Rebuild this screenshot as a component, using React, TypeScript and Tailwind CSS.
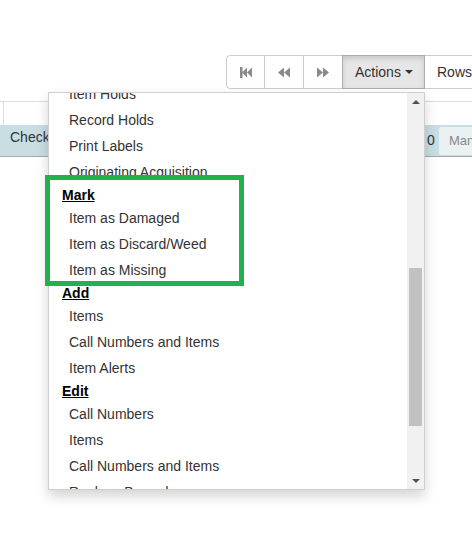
import React from "react";

type Entry = { kind: "item" | "header"; label: string };

const menu: Entry[] = [
  { kind: "item", label: "Item Holds" },
  { kind: "item", label: "Record Holds" },
  { kind: "item", label: "Print Labels" },
  { kind: "item", label: "Originating Acquisition" },
  { kind: "header", label: "Mark" },
  { kind: "item", label: "Item as Damaged" },
  { kind: "item", label: "Item as Discard/Weed" },
  { kind: "item", label: "Item as Missing" },
  { kind: "header", label: "Add" },
  { kind: "item", label: "Items" },
  { kind: "item", label: "Call Numbers and Items" },
  { kind: "item", label: "Item Alerts" },
  { kind: "header", label: "Edit" },
  { kind: "item", label: "Call Numbers" },
  { kind: "item", label: "Items" },
  { kind: "item", label: "Call Numbers and Items" },
  { kind: "item", label: "Replace Barcodes" },
];

function FastBackIcon() {
  return (
    <svg width="12" height="11" viewBox="0 0 12 11" className="fill-current">
      <rect x="0" y="0" width="2.5" height="11" />
      <polygon points="2,5.5 7,0.5 7,10.5" />
      <polygon points="7,5.5 12,0.5 12,10.5" />
    </svg>
  );
}

function BackIcon() {
  return (
    <svg width="12" height="11" viewBox="0 0 12 11" className="fill-current">
      <polygon points="0,5.5 6,0.5 6,10.5" />
      <polygon points="6,5.5 12,0.5 12,10.5" />
    </svg>
  );
}

function ForwardIcon() {
  return (
    <svg width="12" height="11" viewBox="0 0 12 11" className="fill-current">
      <polygon points="12,5.5 6,0.5 6,10.5" />
      <polygon points="6,5.5 0,0.5 0,10.5" />
    </svg>
  );
}

function ActionsMenu() {
  return (
    <div className="absolute top-full right-0 z-10 mt-[3px] flex h-[398px] w-[377px] border border-[#cfcfcf] bg-white text-left shadow-[0_6px_12px_rgba(0,0,0,0.175)]">
      <div className="flex-1 overflow-hidden">
        <ul className="-mt-[12px]">
          {menu.map((m, i) =>
            m.kind === "header" ? (
              <li key={i} className="px-[13px] text-[14px] leading-[20px] font-bold text-black underline">
                {m.label}
              </li>
            ) : (
              <li key={i} className="px-[20px] py-[3px] text-[14px] leading-[20px] text-[#333]">
                {m.label}
              </li>
            )
          )}
        </ul>
      </div>
      <div className="flex w-[17px] flex-col bg-[#f1f1f1]">
        <div className="flex h-[17px] items-center justify-center">
          <div className="h-0 w-0 border-x-[4px] border-b-[4px] border-x-transparent border-b-[#505050]" />
        </div>
        <div className="flex-1 px-[2px]">
          <div className="mt-[158px] h-[158px] bg-[#c1c1c1]" />
        </div>
        <div className="flex h-[17px] items-center justify-center">
          <div className="h-0 w-0 border-x-[4px] border-t-[4px] border-x-transparent border-t-[#505050]" />
        </div>
      </div>
    </div>
  );
}

export default function App() {
  return (
    <div className="relative h-[536px] w-[472px] overflow-hidden bg-white pt-[55px] font-['Liberation_Sans',Arial,sans-serif] text-[14px] text-[#333]">
      {/* toolbar */}
      <div className="flex whitespace-nowrap pl-[226px]">
        <div className="flex h-[34px] text-[#8a8a8a]">
          <button className="flex w-[39px] items-center justify-center rounded-l-[4px] border border-[#ccc] bg-white">
            <FastBackIcon />
          </button>
          <button className="-ml-px flex w-[40px] items-center justify-center border border-[#ccc] bg-white">
            <BackIcon />
          </button>
          <button className="-ml-px flex w-[40px] items-center justify-center border border-[#ccc] bg-white">
            <ForwardIcon />
          </button>
          <div className="relative -ml-px">
            <button className="flex h-[34px] w-[83px] items-center border border-[#adadad] bg-[#e6e6e6] pl-[12px] text-[14px] leading-[20px] text-[#333] shadow-[inset_0_3px_5px_rgba(0,0,0,0.125)]">
              Actions
              <span className="ml-[4px] h-0 w-0 border-x-[4px] border-t-[4px] border-x-transparent border-t-[#333]" />
            </button>
            <ActionsMenu />
          </div>
          <button className="-ml-px flex w-[80px] items-center border border-[#ccc] bg-white pl-[12px] text-[14px] text-[#333]">
            Rows
          </button>
        </div>
      </div>

      {/* table behind the menu */}
      <div className="mt-[12px]">
        <div className="h-[24px] border-t border-[#ddd]">
          <div className="ml-[3px] h-full border-l border-[#ddd]" />
        </div>
        <div className="flex h-[32px] items-center overflow-hidden whitespace-nowrap border-b border-[#a9a9a9] bg-[#c8dee3]">
          <div className="w-[427px] shrink-0 pb-[6px] pl-[10px]">Check Out</div>
          <div className="w-[12px] shrink-0">0</div>
          <div className="flex h-[28px] w-[80px] shrink-0 items-center rounded-l-[3px] bg-[#e9f1f3] pl-[10px] text-[13px] text-[#888]">
            Manage
          </div>
        </div>
      </div>

      {/* highlight around the Mark group */}
      <div className="pointer-events-none absolute top-[175px] left-[45px] z-20 h-[111px] w-[199px] border-[5px] border-[#22b14c]" />
    </div>
  );
}
